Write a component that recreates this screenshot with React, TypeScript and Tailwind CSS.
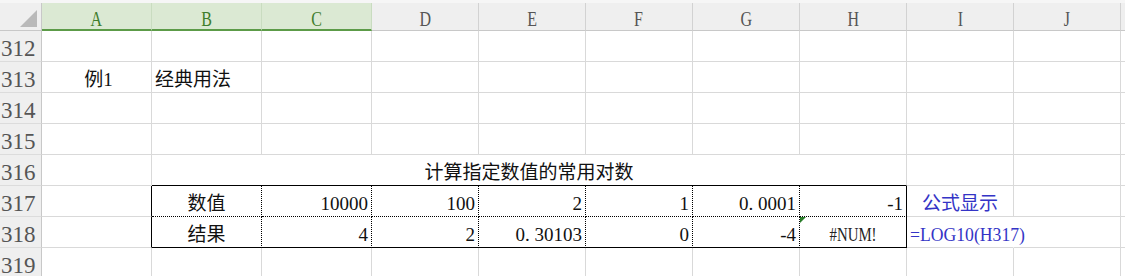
import React from "react";

const G = "border-r border-r-[#d9d9d9] border-b border-b-[#d9d9d9]";
const CELL = "relative flex items-end pb-[3px] leading-[19px] text-[19px] whitespace-nowrap";

const RowHead = ({ n }: { n: number }) => (
  <div className="flex items-end pb-[1px] pl-[1px] bg-[#efefef] border-r border-r-[#c8c8c8] border-b border-b-[#dcdcdc] text-[23px] leading-[23px] text-[#555555] overflow-hidden">
    {n}
  </div>
);

const Empty = () => <div className={G} />;

const ColHead = ({ l, green }: { l: string; green?: boolean }) =>
  green ? (
    <div className="flex items-end justify-center pb-[0px] bg-[#dbe9d3] border-r border-r-[#c9dcc0] border-b-2 border-b-[#5c9b48] text-[20px] leading-[20px] text-[#3f7d2c]">
      <span className="inline-block scale-x-[0.8]">{l}</span>
    </div>
  ) : (
    <div className="flex items-end justify-center pb-[1px] bg-[#efefef] border-r border-r-[#d2d2d2] border-b border-b-[#c8c8c8] text-[20px] leading-[20px] text-[#555555]">
      <span className="inline-block scale-x-[0.8]">{l}</span>
    </div>
  );

const NumCell = ({ v, bottom }: { v: React.ReactNode; bottom?: boolean }) => (
  <div
    className={
      bottom
        ? `${CELL} justify-end pr-[3px] border-r border-r-black [border-right-style:dotted] border-b border-b-black`
        : `${CELL} justify-end pr-[3px] border-r border-r-black [border-right-style:dotted] border-b border-b-black [border-bottom-style:dotted]`
    }
  >
    {v}
  </div>
);

const Dot = () => <span className="inline-block w-[9.5px]">.</span>;

export default function App() {
  const rows312to315 = [312, 313, 314, 315];
  return (
    <div className="w-[1125px] h-[276px] overflow-hidden bg-white text-[#111111] [font-family:'Liberation_Serif','Noto_Sans_CJK_SC',serif]">
      <div className="h-[3px] bg-[#f6f6f6]" />
      <div className="grid grid-cols-[42px_110px_110px_110px_107px_107px_107px_107px_107px_107px_107px_1fr] grid-rows-[28px_31px_31px_31px_31px_31px_31px_31px_31px]">
        {/* header */}
        <div className="relative bg-[#efefef] border-r border-r-[#c8c8c8] border-b border-b-[#c8c8c8]">
          <svg className="absolute right-[4px] bottom-[3px]" width="17" height="17" viewBox="0 0 17 17">
            <polygon points="17,0 17,17 0,17" fill="#b9b9b9" />
          </svg>
        </div>
        <ColHead l="A" green />
        <ColHead l="B" green />
        <ColHead l="C" green />
        <ColHead l="D" />
        <ColHead l="E" />
        <ColHead l="F" />
        <ColHead l="G" />
        <ColHead l="H" />
        <ColHead l="I" />
        <ColHead l="J" />
        <div className="bg-[#efefef] border-b border-b-[#c8c8c8]" />

        {/* rows 312 - 315 */}
        {rows312to315.map((n) => (
          <React.Fragment key={n}>
            <RowHead n={n} />
            {n === 313 ? (
              <>
                <div className={`${CELL} ${G} justify-center pl-[4px]`}>例1</div>
                <div className={`${CELL} ${G} justify-start pl-[3px]`}>经典用法</div>
              </>
            ) : (
              <>
                <Empty />
                <Empty />
              </>
            )}
            <Empty />
            <Empty />
            <Empty />
            <Empty />
            <Empty />
            <Empty />
            <Empty />
            <Empty />
            <div className="border-b border-b-[#d9d9d9]" />
          </React.Fragment>
        ))}

        {/* row 316 */}
        <RowHead n={316} />
        <Empty />
        <div className={`${CELL} col-span-7 justify-center border-r border-r-[#d9d9d9] border-b border-b-black`}>
          计算指定数值的常用对数
        </div>
        <Empty />
        <Empty />
        <div className="border-b border-b-[#d9d9d9]" />

        {/* row 317 */}
        <RowHead n={317} />
        <div className="border-r border-r-black border-b border-b-[#d9d9d9]" />
        <div className={`${CELL} justify-center border-r border-r-black [border-right-style:dotted] border-b border-b-black [border-bottom-style:dotted]`}>
          数值
        </div>
        <NumCell v="10000" />
        <NumCell v="100" />
        <NumCell v="2" />
        <NumCell v="1" />
        <NumCell v={<>0<Dot />0001</>} />
        <div className={`${CELL} justify-end pr-[3px] border-r border-r-black border-b border-b-black [border-bottom-style:dotted]`}>
          -1
        </div>
        <div className={`${CELL} ${G} justify-center text-[#3434c6]`}>公式显示</div>
        <Empty />
        <div className="border-b border-b-[#d9d9d9]" />

        {/* row 318 */}
        <RowHead n={318} />
        <div className="border-r border-r-black border-b border-b-[#d9d9d9]" />
        <div className={`${CELL} justify-center border-r border-r-black [border-right-style:dotted] border-b border-b-black`}>
          结果
        </div>
        <NumCell v="4" bottom />
        <NumCell v="2" bottom />
        <NumCell v={<>0<Dot />30103</>} bottom />
        <NumCell v="0" bottom />
        <NumCell v="-4" bottom />
        <div className={`${CELL} justify-center border-r border-r-black border-b border-b-black`}>
          <svg className="absolute left-0 top-0" width="6" height="6" viewBox="0 0 6 6">
            <polygon points="0,0 6,0 0,6" fill="#2a7d2a" />
          </svg>
          <span className="inline-block scale-x-[0.78] text-[#222222]">#NUM!</span>
        </div>
        <div className={`${CELL} z-10 overflow-visible justify-start pl-[3px] border-r border-r-white border-b border-b-[#d9d9d9] text-[#3434c6]`}>
          <span className="inline-block origin-left scale-x-[0.93]">=LOG10(H317)</span>
        </div>
        <Empty />
        <div className="border-b border-b-[#d9d9d9]" />

        {/* row 319 */}
        <RowHead n={319} />
        <Empty />
        <Empty />
        <Empty />
        <Empty />
        <Empty />
        <Empty />
        <Empty />
        <Empty />
        <Empty />
        <Empty />
        <div className="border-b border-b-[#d9d9d9]" />
      </div>
    </div>
  );
}
